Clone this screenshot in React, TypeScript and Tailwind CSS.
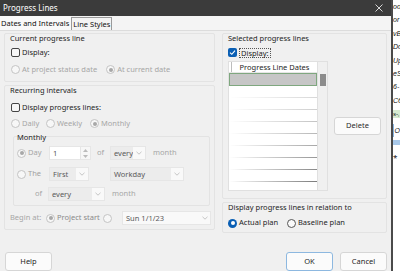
import React from 'react';

type RadioProps = { checked?: boolean; disabled?: boolean; accent?: boolean };

const Radio: React.FC<RadioProps> = ({ checked, disabled, accent }) => {
  if (accent) {
    return (
      <span className="w-[9px] h-[9px] rounded-full bg-[#0a5fb4] flex items-center justify-center shrink-0">
        <span className="w-[4px] h-[4px] rounded-full bg-white" />
      </span>
    );
  }
  return (
    <span
      className={
        disabled
          ? 'w-[9px] h-[9px] rounded-full border border-[#c4c4c4] bg-[#f7f7f7] flex items-center justify-center shrink-0'
          : 'w-[9px] h-[9px] rounded-full border border-[#555] bg-[#fafafa] flex items-center justify-center shrink-0'
      }
    >
      {checked && <span className="w-[4px] h-[4px] rounded-full bg-[#a8a8a8]" />}
    </span>
  );
};

const Check: React.FC<{ checked?: boolean }> = ({ checked }) =>
  checked ? (
    <span className="w-[9px] h-[9px] rounded-[2px] bg-[#0a5fb4] flex items-center justify-center shrink-0">
      <svg width="7" height="7" viewBox="0 0 7 7">
        <path d="M1 3.6 L2.8 5.3 L6 1.6" stroke="white" strokeWidth="1.1" fill="none" />
      </svg>
    </span>
  ) : (
    <span className="w-[9px] h-[9px] rounded-[2px] border border-[#444] bg-[#f6f6f6] shrink-0" />
  );

const Chevron = () => (
  <svg width="6" height="4" viewBox="0 0 6 4">
    <path d="M0.5 0.8 L3 3.2 L5.5 0.8" stroke="#b8b8b8" strokeWidth="0.8" fill="none" />
  </svg>
);

const Select: React.FC<{ value: string; width: string }> = ({ value, width }) => (
  <div className={`${width} h-[14px] flex border border-[#e6e6e6] bg-[#ececec]`}>
    <span className="flex-1 pl-[3px] leading-[12px] text-[#5a5a5a]">{value}</span>
    <span className="w-[12px] bg-[#f9f9f9] flex items-center justify-center">
      <Chevron />
    </span>
  </div>
);

const Group: React.FC<{ label: string; className: string; children?: React.ReactNode }> = ({
  label,
  className,
  children,
}) => (
  <div className={`border border-[#e3e3e3] rounded-[2px] flex flex-col ${className}`}>
    <div className="h-[10px] leading-[10px] pl-[5px] text-[#1e1e1e] mt-[-1px]">{label}</div>
    {children}
  </div>
);

const rowLines = [
  'bg-linear-to-r from-[#ffffff] to-[#d8d8d8]',
  'bg-linear-to-r from-[#ffffff] to-[#cfcfcf]',
  'bg-linear-to-r from-[#ffffff] to-[#c4c4c4]',
  'bg-linear-to-r from-[#ffffff] to-[#b8b8b8]',
  'bg-linear-to-r from-[#ffffff] to-[#a8a8a8]',
  'bg-linear-to-r from-[#ffffff] to-[#989898]',
  'bg-linear-to-r from-[#ffffff] to-[#8a8a8a]',
  'bg-linear-to-r from-[#ffffff] to-[#7c7c7c]',
];

const sideRows = ['oo', 'or', 'vB', 'Do', 'Up', 'eS', '6-', 'C6'];

const App: React.FC = () => {
  return (
    <div className="w-[400px] h-[271px] flex overflow-hidden bg-white font-['Noto_Sans',sans-serif] text-[7.5px] whitespace-nowrap">
      {/* Dialog */}
      <div className="w-[391px] flex flex-col bg-[#f0f0f0]">
        <div className="h-[16px] bg-[#3b3b3b] flex items-center justify-between pl-[3px] pr-[8px]">
          <span className="text-white text-[8px] leading-none">Progress Lines</span>
          <svg width="8" height="8" viewBox="0 0 8 8">
            <path d="M0.5 0.5 L7.5 7.5 M7.5 0.5 L0.5 7.5" stroke="#e8e8e8" strokeWidth="0.9" />
          </svg>
        </div>

        {/* Tabs */}
        <div className="h-[15px] flex items-end bg-[#f4f4f4] border-b border-[#dcdcdc]">
          <div className="h-[14px] leading-[14px] pl-[1px] pr-[2px] text-[#111] bg-[#f9f9f9]">Dates and Intervals</div>
          <div className="h-[13px] leading-[12px] px-[1px] text-[#111] border border-b-0 border-[#9a9a9a] bg-[#f4f4f4]">
            Line Styles
          </div>
        </div>

        {/* Panels */}
        <div className="flex gap-[7px] pl-[4px] pt-[2px]">
          {/* Left column */}
          <div className="w-[211px] flex flex-col gap-[3px]">
            <Group label="Current progress line" className="h-[49px]">
              <div className="flex items-center gap-[2px] pl-[6px] mt-[5px] h-[9px]">
                <Check />
                <span className="text-[#1e1e1e]">Display:</span>
              </div>
              <div className="flex items-center pl-[6px] mt-[8px] h-[9px] text-[#a6a6a6]">
                <Radio disabled />
                <span className="ml-[2px]">At project status date</span>
                <span className="ml-[9px]">
                  <Radio disabled checked />
                </span>
                <span className="ml-[2px]">At current date</span>
              </div>
            </Group>

            <Group label="Recurring intervals" className="h-[145px]">
              <div className="flex items-center gap-[2px] pl-[6px] mt-[8px] h-[9px]">
                <Check />
                <span className="text-[#1e1e1e]">Display progress lines:</span>
              </div>
              <div className="flex items-center pl-[6px] mt-[7px] h-[9px] text-[#a6a6a6]">
                <Radio disabled />
                <span className="ml-[2px] w-[24px]">Daily</span>
                <Radio disabled />
                <span className="ml-[2px] w-[33px]">Weekly</span>
                <Radio disabled checked />
                <span className="ml-[2px]">Monthly</span>
              </div>

              {/* Monthly sub group */}
              <div className="ml-[8px] mr-[4px] mt-[8px] h-[70px] border border-[#e3e3e3] rounded-[2px] flex flex-col">
                <div className="h-[8px] leading-[8px] pl-[3px] mt-[-4px] text-[#1e1e1e]">Monthly</div>
                <div className="flex items-center h-[14px] mt-[5px] pl-[3px] text-[#a6a6a6]">
                  <Radio disabled checked />
                  <span className="ml-[2px] w-[21px]">Day</span>
                  <div className="w-[32px] h-[14px] bg-white border border-[#e6e6e6] pl-[3px] leading-[12px] text-[#555]">1</div>
                  <div className="w-[10px] h-[14px] flex flex-col items-center justify-around bg-[#f7f7f7] border border-[#e6e6e6] border-l-0">
                    <svg width="5" height="3" viewBox="0 0 5 3">
                      <path d="M0 3 L2.5 0 L5 3 Z" fill="#bbb" />
                    </svg>
                    <svg width="5" height="3" viewBox="0 0 5 3">
                      <path d="M0 0 L2.5 3 L5 0 Z" fill="#bbb" />
                    </svg>
                  </div>
                  <span className="ml-[6px] w-[13px]">of</span>
                  <Select value="every" width="w-[36px]" />
                  <span className="ml-[7px]">month</span>
                </div>
                <div className="flex items-center h-[14px] mt-[7px] pl-[3px] text-[#a6a6a6]">
                  <Radio disabled />
                  <span className="ml-[2px] w-[21px] text-[#a0a0a0]">The</span>
                  <Select value="First" width="w-[40px]" />
                  <span className="w-[21px]" />
                  <Select value="Workday" width="w-[74px]" />
                </div>
                <div className="flex items-center h-[14px] mt-[6px] pl-[21px] text-[#a6a6a6]">
                  <span className="w-[13px]">of</span>
                  <Select value="every" width="w-[57px]" />
                  <span className="ml-[7px]">month</span>
                </div>
              </div>

              <div className="flex items-center h-[14px] mt-[5px] pl-[5px] text-[#a6a6a6]">
                <span className="w-[36px]">Begin at:</span>
                <Radio disabled checked />
                <span className="ml-[2px] w-[46px] text-[#8a8a8a]">Project start</span>
                <Radio disabled />
                <div className="ml-[10px] w-[89px] h-[14px] flex border border-[#e6e6e6] bg-[#f9f9f9]">
                  <span className="flex-1 pl-[3px] leading-[12px] text-[#5a5a5a]">Sun 1/1/23</span>
                  <span className="w-[10px] flex items-center justify-center">
                    <Chevron />
                  </span>
                </div>
              </div>
            </Group>
          </div>

          {/* Right column */}
          <div className="w-[165px] flex flex-col gap-[3px]">
            <Group label="Selected progress lines" className="h-[166px]">
              <div className="flex items-center gap-[2px] pl-[5px] mt-[5px] h-[9px]">
                <Check checked />
                <span className="text-[#1e1e1e] border border-dotted border-[#555] px-[1px] leading-[8px]">Display:</span>
              </div>
              <div className="flex items-start mt-[4px] pl-[5px]">
                <div className="w-[100px] h-[130px] flex bg-white border border-[#e0e0e0]">
                  <div className="w-[88px] flex flex-col">
                    <div className="h-[11px] flex border-b border-[#e6e6e6]">
                      <span className="w-[3px] border-r border-[#bdbdbd]" />
                      <span className="flex-1 text-center leading-[11px] text-[#1e1e1e]">Progress Line Dates</span>
                    </div>
                    <div className="h-[13px] bg-[#c6c6c6] border border-[#7fa77f]" />
                    {rowLines.map((cls, i) => (
                      <div key={i} className="h-[12px] flex flex-col justify-end">
                        <div className={`h-px ${cls}`} />
                      </div>
                    ))}
                  </div>
                  <div className="flex-1 bg-[#f0f0f0] border-l border-[#e0e0e0] flex justify-center pt-[12px]">
                    <div className="w-[6px] h-[12px] bg-[#8c8c8c]" />
                  </div>
                </div>
                <div className="ml-[6px] mt-[56px] w-[47px] h-[18px] rounded-[3px] bg-[#fbfbfb] border border-[#d6d6d6] flex items-center justify-center text-[#2a2a2a]">
                  Delete
                </div>
              </div>
            </Group>

            <Group label="Display progress lines in relation to" className="h-[31px]">
              <div className="flex items-center pl-[5px] mt-[6px] h-[10px] text-[#1e1e1e]">
                <Radio accent />
                <span className="ml-[2px] w-[48px]">Actual plan</span>
                <Radio />
                <span className="ml-[2px]">Baseline plan</span>
              </div>
            </Group>
          </div>
        </div>

        {/* Bottom buttons */}
        <div className="flex mt-[19px] pl-[5px] pr-[4px]">
          <div className="w-[47px] h-[19px] bg-[#fbfbfb] border border-[#d6d6d6] rounded-[3px] flex items-center justify-center text-[#1e1e1e]">
            Help
          </div>
          <div className="flex-1" />
          <div className="w-[47px] h-[19px] bg-[#fbfbfb] border border-[#8db8e0] rounded-[3px] flex items-center justify-center text-[#1e1e1e]">
            OK
          </div>
          <div className="ml-[7px] w-[47px] h-[19px] bg-[#fbfbfb] border border-[#d6d6d6] rounded-[3px] flex items-center justify-center text-[#1e1e1e]">
            Cancel
          </div>
        </div>
      </div>

      {/* Dialog border */}
      <div className="w-[2px] bg-[#4a4a4a]" />

      {/* Application behind */}
      <div className="flex-1 flex flex-col bg-white italic text-[7px] leading-[13.4px] text-[#111] font-['Liberation_Sans',sans-serif] overflow-hidden">
        {sideRows.map((t) => (
          <div key={t} className="h-[13.4px]">
            {t}
          </div>
        ))}
        <div className="h-[8px] bg-[#d6ebd0] text-[6px] leading-[8px] mt-[3px]">s-,</div>
        <div className="h-[13px] mt-[6px] flex">
          <span className="w-[2px] bg-[#8ab4e0]" />
          <span className="pl-[1px]">O</span>
        </div>
        <div className="h-[5px] bg-[#a9c9ea] mt-[3px]" />
        <div className="h-[10px] mt-[5px] text-[8px] leading-[10px] not-italic">⁎</div>
      </div>
    </div>
  );
};

export default App;
